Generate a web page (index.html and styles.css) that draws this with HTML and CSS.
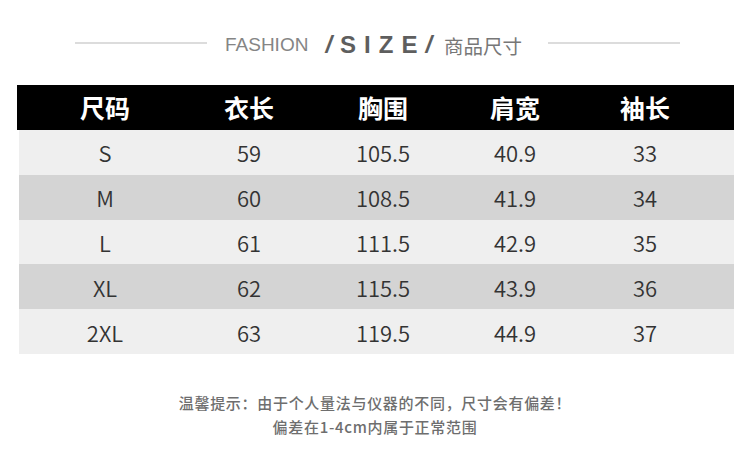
FILE: index.html
```html
<!DOCTYPE html>
<html lang="zh-CN">
<head>
<meta charset="utf-8">
<title>SIZE 商品尺寸</title>
<link rel="stylesheet" href="styles.css">
</head>
<body>
<div class="page">
  <div class="title">
    <span class="rule rule-left"></span>
    <span class="fashion">FASHION</span>
    <span class="size"><i class="slash">/</i>SIZE<i class="slash">/</i></span>
    <span class="cn">商品尺寸</span>
    <span class="rule rule-right"></span>
  </div>

  <div class="table">
    <div class="row head">
      <div class="cell">尺码</div>
      <div class="cell">衣长</div>
      <div class="cell">胸围</div>
      <div class="cell">肩宽</div>
      <div class="cell">袖长</div>
      <div class="cell"></div>
    </div>
    <div class="row light">
      <div class="cell">S</div><div class="cell">59</div><div class="cell">105.5</div><div class="cell">40.9</div><div class="cell">33</div><div class="cell"></div>
    </div>
    <div class="row dark">
      <div class="cell">M</div><div class="cell">60</div><div class="cell">108.5</div><div class="cell">41.9</div><div class="cell">34</div><div class="cell"></div>
    </div>
    <div class="row light">
      <div class="cell">L</div><div class="cell">61</div><div class="cell">111.5</div><div class="cell">42.9</div><div class="cell">35</div><div class="cell"></div>
    </div>
    <div class="row dark">
      <div class="cell">XL</div><div class="cell">62</div><div class="cell">115.5</div><div class="cell">43.9</div><div class="cell">36</div><div class="cell"></div>
    </div>
    <div class="row light">
      <div class="cell">2XL</div><div class="cell">63</div><div class="cell">119.5</div><div class="cell">44.9</div><div class="cell">37</div><div class="cell"></div>
    </div>
  </div>

  <div class="note">
    <p>温馨提示：由于个人量法与仪器的不同，尺寸会有偏差！</p>
    <p>偏差在1-4cm内属于正常范围</p>
  </div>
</div>
</body>
</html>
```

FILE: styles.css
```css
html, body {
  margin: 0;
  padding: 0;
  background: #ffffff;
}

.page {
  width: 750px;
  height: 466px;
  overflow: hidden;
  font-family: "Noto Sans CJK SC", "Noto Sans", sans-serif;
}

.title {
  display: flex;
  align-items: center;
  height: 30px;
  margin-top: 30px;
  padding-left: 75px;
}

.rule {
  display: block;
  width: 132px;
  height: 2px;
  background: #dcdcdc;
  margin-top: -4px;
}

.fashion {
  margin-left: 18px;
  font-family: "Liberation Sans", Arial, sans-serif;
  font-size: 19px;
  color: #858585;
}

.size {
  margin-left: 17px;
  font-family: "Liberation Sans", Arial, sans-serif;
  font-weight: bold;
  font-size: 24px;
  color: #5e5e5e;
  letter-spacing: 8px;
}

.slash {
  font-style: italic;
}

.cn {
  margin-left: 4px;
  font-size: 19.5px;
  color: #777777;
}

.rule-right {
  margin-left: 26px;
}

.table {
  margin-top: 25px;
  margin-left: 19px;
  width: 715px;
}

.row {
  display: grid;
  grid-template-columns: 172px 116px 152px 112px 148px 1fr;
  align-items: center;
  height: 44.8px;
}

.cell {
  text-align: center;
  font-size: 22px;
  font-weight: 350;
  color: #333333;
  line-height: 1;
}

.head {
  height: 45px;
  background: #000000;
  margin-left: -2px;
  padding-left: 2px;
}

.head .cell {
  color: #ffffff;
  font-weight: bold;
  font-size: 25px;
}

.light {
  background: #efefef;
}

.dark {
  background: #d4d4d4;
}

.note {
  margin-top: 37px;
  text-align: center;
  color: #6e6e6e;
  font-size: 15px;
  font-weight: 500;
  letter-spacing: 0.7px;
  line-height: 24px;
}

.note p {
  margin: 0;
}
```
